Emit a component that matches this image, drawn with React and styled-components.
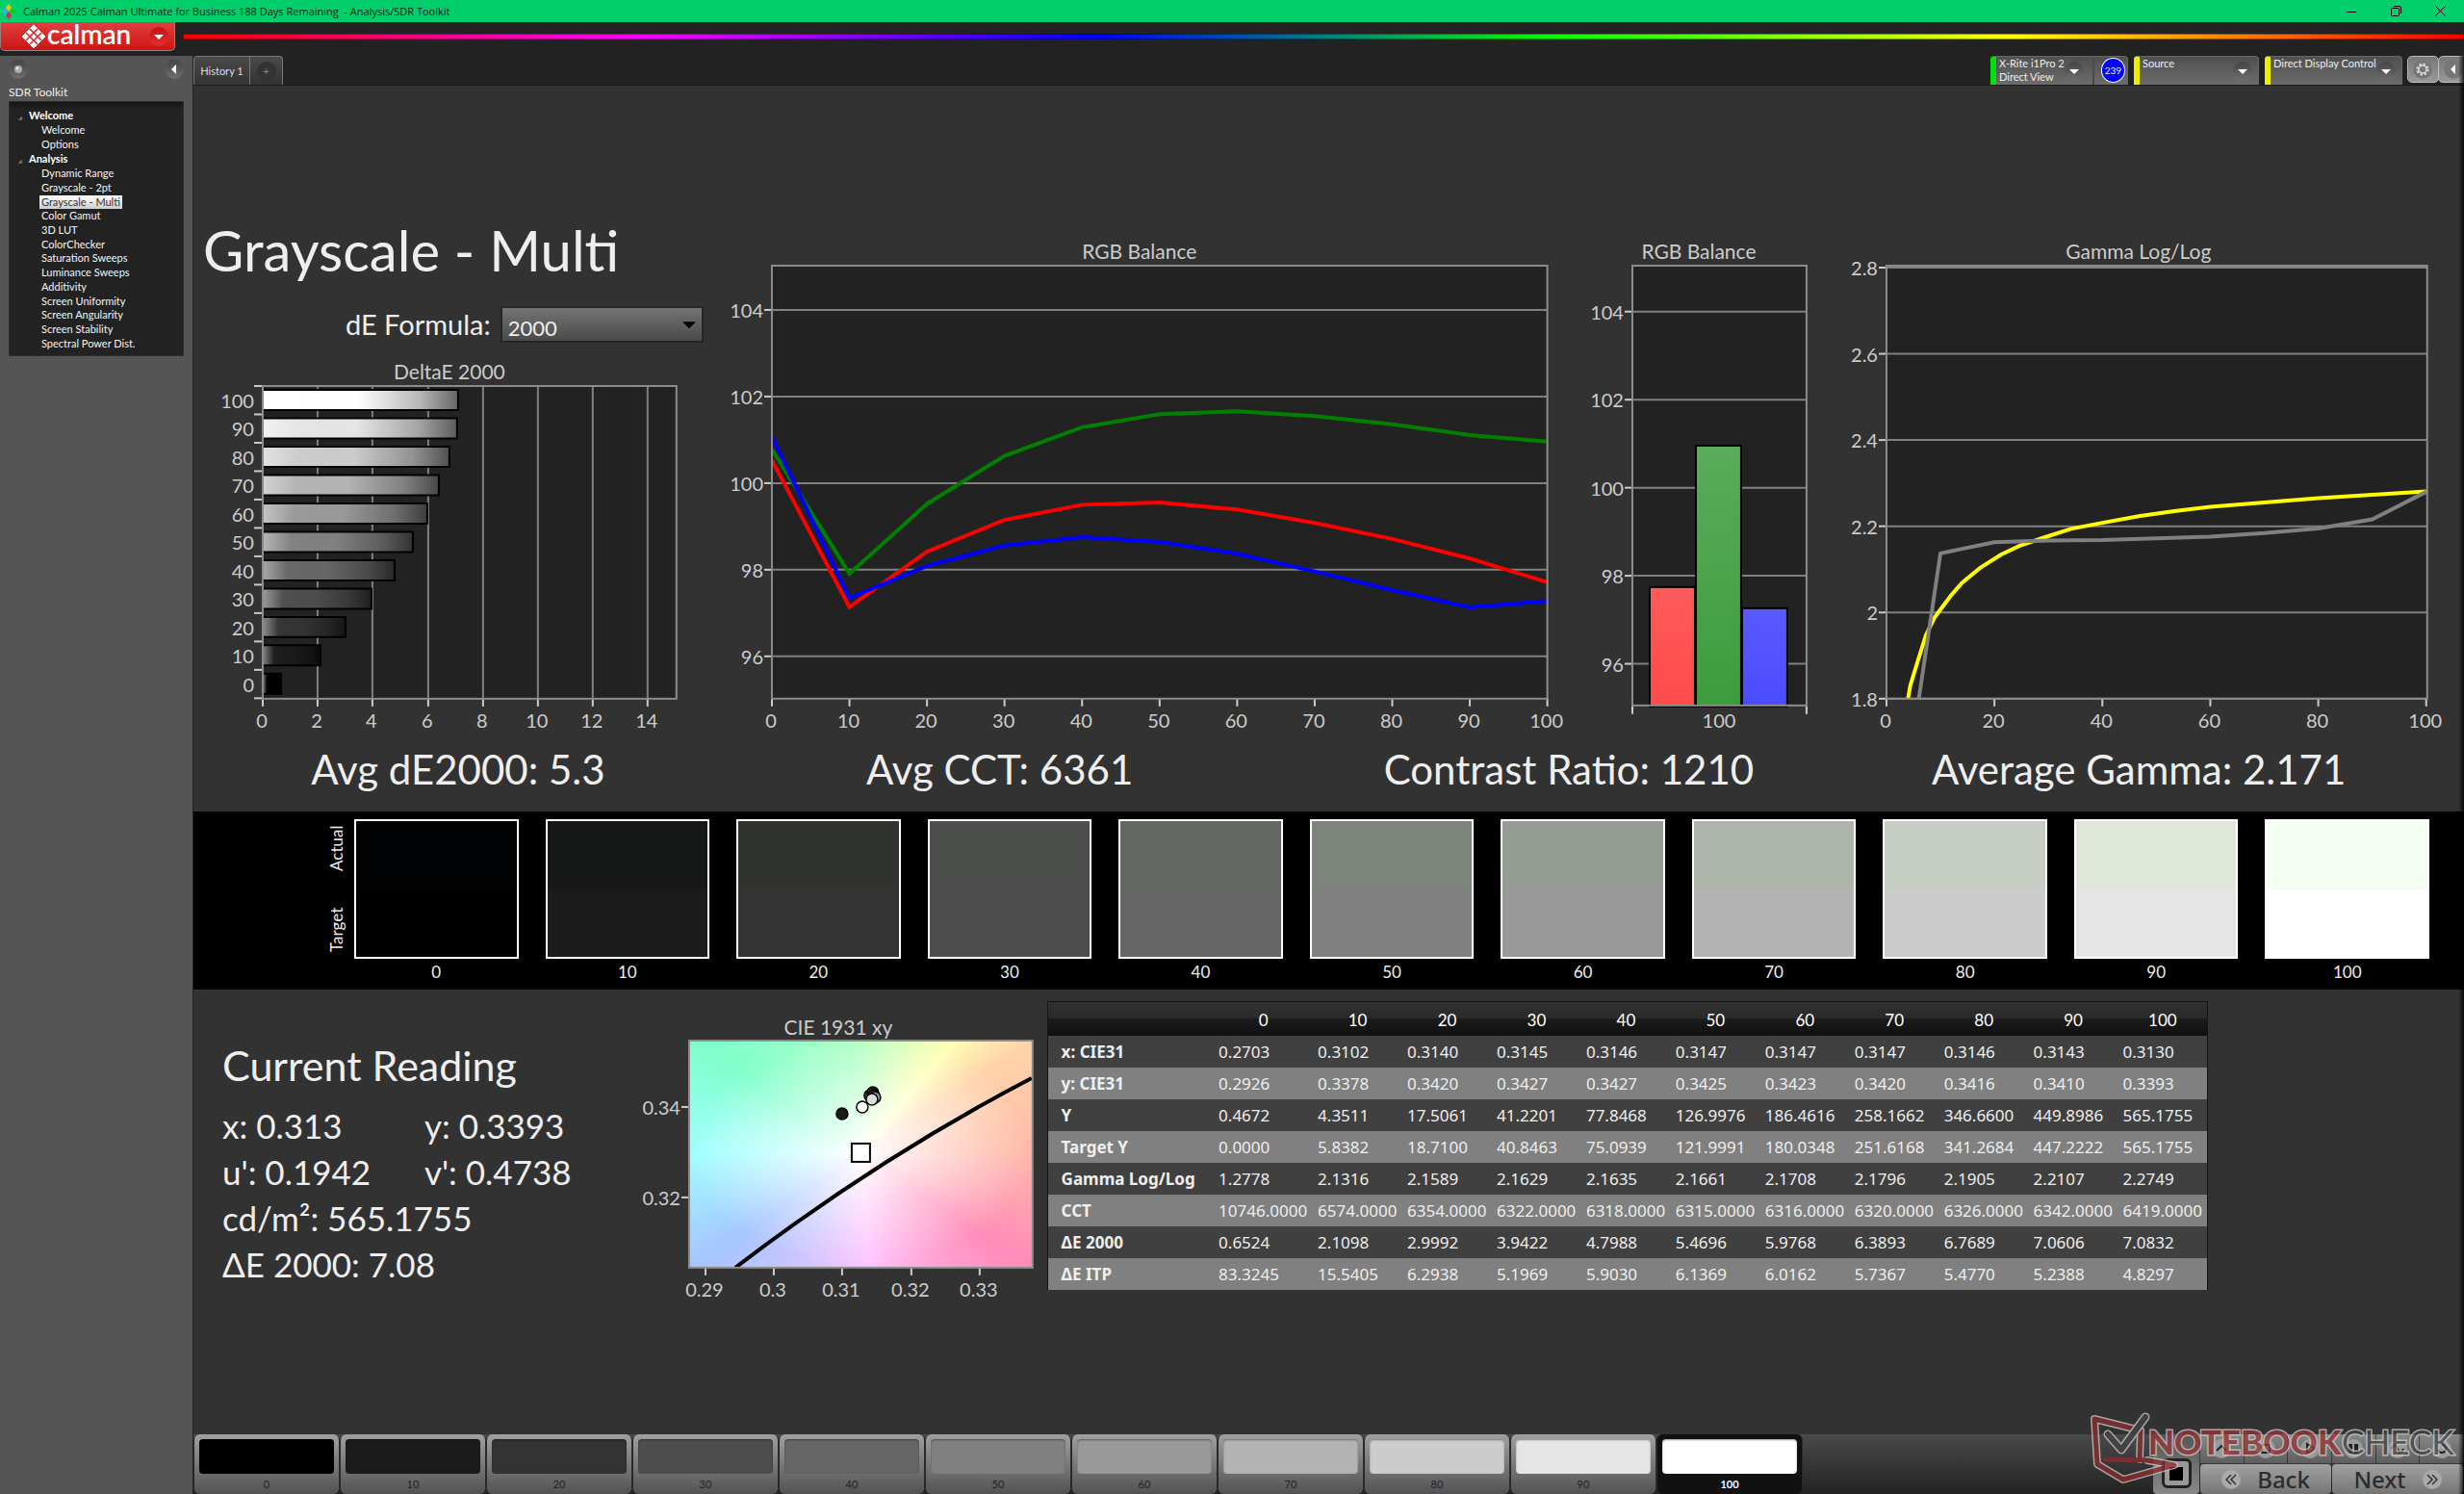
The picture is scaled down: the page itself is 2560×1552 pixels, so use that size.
import React from "react";
import styled, { createGlobalStyle } from "styled-components";

const GlobalStyle = createGlobalStyle`
    * { box-sizing: border-box; }

    body{
        margin: 0;
        background: #323232;
        color: #eee;
        font: 11px Lato, sans-serif;
    }

    h1, h2, p, ul, dl, dd, dt{
        margin: 0;
        padding: 0;
        font-weight: normal;
    }

    button{
        margin: 0;
        padding: 0;
        border: 0;
        background: none;
        color: inherit;
        font: inherit;
    }
`

/* ---------- data ---------- */

const LEVELS = [0, 10, 20, 30, 40, 50, 60, 70, 80, 90, 100]
const GRAYS = ['#000000', '#1b1b1b', '#333333', '#4d4d4d', '#666666', '#808080', '#999999', '#b3b3b3', '#cccccc', '#e5e5e5', '#ffffff']
const ACTUAL = ['#010204', '#151817', '#31332f', '#4b4e4a', '#636962', '#7d847c', '#959c93', '#adb5aa', '#c6cec3', '#dfe7db', '#f2fff1']

const NAV = [
    { title: 'Welcome', items: ['Welcome', 'Options'] },
    {
        title: 'Analysis',
        items: ['Dynamic Range', 'Grayscale - 2pt', 'Grayscale - Multi', 'Color Gamut', '3D LUT', 'ColorChecker',
            'Saturation Sweeps', 'Luminance Sweeps', 'Additivity', 'Screen Uniformity', 'Screen Angularity',
            'Screen Stability', 'Spectral Power Dist.'],
    },
]

const READINGS = [
    ['x: CIE31', '0.2703', '0.3102', '0.3140', '0.3145', '0.3146', '0.3147', '0.3147', '0.3147', '0.3146', '0.3143', '0.3130'],
    ['y: CIE31', '0.2926', '0.3378', '0.3420', '0.3427', '0.3427', '0.3425', '0.3423', '0.3420', '0.3416', '0.3410', '0.3393'],
    ['Y', '0.4672', '4.3511', '17.5061', '41.2201', '77.8468', '126.9976', '186.4616', '258.1662', '346.6600', '449.8986', '565.1755'],
    ['Target Y', '0.0000', '5.8382', '18.7100', '40.8463', '75.0939', '121.9991', '180.0348', '251.6168', '341.2684', '447.2222', '565.1755'],
    ['Gamma Log/Log', '1.2778', '2.1316', '2.1589', '2.1629', '2.1635', '2.1661', '2.1708', '2.1796', '2.1905', '2.2107', '2.2749'],
    ['CCT', '10746.0000', '6574.0000', '6354.0000', '6322.0000', '6318.0000', '6315.0000', '6316.0000', '6320.0000', '6326.0000', '6342.0000', '6419.0000'],
    ['ΔE 2000', '0.6524', '2.1098', '2.9992', '3.9422', '4.7988', '5.4696', '5.9768', '6.3893', '6.7689', '7.0606', '7.0832'],
    ['ΔE ITP', '83.3245', '15.5405', '6.2938', '5.1969', '5.9030', '6.1369', '6.0162', '5.7367', '5.4770', '5.2388', '4.8297'],
]
const DELTA_E = READINGS[6].slice(1).map(Number)

const BALANCE = [
    { color: '#008000', values: [100.78, 97.91, 99.52, 100.63, 101.29, 101.59, 101.66, 101.55, 101.36, 101.11, 100.96] },
    { color: '#ff0000', values: [100.53, 97.14, 98.42, 99.15, 99.5, 99.55, 99.39, 99.08, 98.71, 98.26, 97.71] },
    { color: '#0000ff', values: [101.08, 97.35, 98.09, 98.56, 98.75, 98.64, 98.37, 97.96, 97.53, 97.13, 97.28] },
]

const GAMMA_TARGET = [[4, 1.8], [4.4, 1.83], [5.7, 1.883], [7.3, 1.947], [8.9, 1.988], [10.5, 2.015], [12, 2.04],
    [14, 2.069], [17.3, 2.103], [21.2, 2.134], [24.7, 2.155], [29, 2.173], [34.2, 2.194], [40, 2.208], [47, 2.224],
    [53.3, 2.235], [60, 2.245], [70, 2.255], [80, 2.265], [90, 2.273], [100, 2.281]]
const GAMMA_ACTUAL = [[6, 1.8], [10, 2.137], [20, 2.163], [30, 2.167], [40, 2.168], [50, 2.172], [60, 2.176],
    [70, 2.184], [80, 2.195], [90, 2.216], [100, 2.28]]

/* ---------- window and header ---------- */

const Page = styled.div`
    min-height: 100vh;
    display: flex;
    flex-direction: column;
`

const TitleBar = styled.header`
    height: 23px;
    display: flex;
    align-items: center;
    background: #00cf6b;
    color: #0c2416;
    font: 11px "Open Sans", sans-serif;
    padding: 0 2px 0 1px;

    .name{
        flex: 1;
        white-space: pre;
        padding-left: 7px;
    }
`

const WindowButton = styled.button`
    width: 46px;
    height: 23px;
    display: flex;
    align-items: center;
    justify-content: center;
`

const BrandRow = styled.div`
    height: 35px;
    display: flex;
    gap: 8px;
    background: #222;
`

const BrandButton = styled.button`
    width: 182px;
    height: 30px;
    display: flex;
    align-items: center;
    padding: 0 6px 0 21px;
    border: 1px solid #9a8080;
    border-top: 0;
    border-radius: 0 0 5px 5px;
    background: linear-gradient(#e04040, #cc1414);
    color: #fff;
    font: 600 28px/28px Lato, sans-serif;

    .word{
        flex: 1;
        text-align: left;
        padding: 0 0 5px 1px;
    }
`

const Rainbow = styled.div`
    flex: 1;
    height: 6px;
    margin-top: 12px;
    border: 1px solid #0006;
    background: linear-gradient(90deg, #f00, #f0f 20%, #00f 40%, #0f0 60%, #ff0 80%, #f00);
`

const Round = styled.span`
    width: 20px;
    height: 20px;
    flex: none;
    display: flex;
    align-items: center;
    justify-content: center;
    border-radius: 50%;
    background: ${props => props.$bg || 'linear-gradient(#444, #6e6e6e)'};
`

const Body = styled.div`
    flex: 1;
    display: flex;
`

/* ---------- sidebar ---------- */

const Sidebar = styled.aside`
    width: 201px;
    flex: none;
    padding: 4px 10px 4px 9px;
    background: #555;

    .top{
        display: flex;
        justify-content: space-between;
    }
    .kit{
        font-size: 12px;
        line-height: 16px;
        padding: 6px 0 1px;
    }
`

const Tree = styled.nav`
    height: 265px;
    padding: 6px 0 0 9px;
    border: 1px solid #2e2e2e;
    background: linear-gradient(#151515, #222 8px);
`

const TreeTitle = styled.p`
    height: 16px;
    line-height: 15px;
    font-weight: bold;
    color: #fff;

    &:before{
        content: "◢";
        display: inline-block;
        width: 11px;
        font-size: 5px;
        color: #777;
    }
`

const TreeList = styled.ul`
    height: ${props => props.$height}px;
    display: flex;
    flex-direction: column;
    padding-left: 22px;
    list-style: none;

    li{
        flex: 1;
        display: flex;
        align-items: center;
    }
    a{
        padding: 0 2px;
        line-height: 14px;
        color: #f4f4f4;
        text-decoration: none;
    }
    a[aria-current]{
        background: linear-gradient(#fff, #ccc);
        color: #333;
    }
`

/* ---------- tab strip ---------- */

const Main = styled.main`
    position: relative;
    flex: 1;
    min-width: 0;
    display: flex;
    flex-direction: column;
    border-left: 1px solid #222;
    margin-left: -1px;

    &:after{
        content: "";
        position: absolute;
        top: 0;
        right: 0;
        bottom: 0;
        width: 6px;
        background: linear-gradient(90deg, #0000, #000c);
        pointer-events: none;
    }
`

const Strip = styled.div`
    height: 31px;
    display: flex;
    justify-content: space-between;
    background: #222;
    border-bottom: 1px solid #1b1b1b;
`

const Tabs = styled.div`
    display: flex;
    border: 1px solid #777;
    border-bottom: 0;
    border-radius: 4px 4px 0 0;
    background: linear-gradient(#4a4a4a, #333);

    button{
        width: 33px;
        display: flex;
        align-items: center;
        justify-content: center;
        color: #888;
    }
    button:first-child{
        width: 58px;
        border-right: 1px solid #777;
        color: #ddd;
    }
`

const Devices = styled.div`
    display: flex;
    gap: 6px;
`

const Device = styled.div`
    width: ${props => props.$width}px;
    display: flex;
    padding-right: 6px;
    border: 1px solid #666;
    border-width: 1px 1px 0 0;
    border-left: 6px solid ${props => props.$light};
    border-radius: 4px 4px 0 0;
    background: linear-gradient(#505050, #6c6c6c);
    color: #eee;
    line-height: 14px;

    .label{
        flex: 1;
        padding: 0 0 0 3px;
        white-space: nowrap;
    }
    button{
        align-self: center;
    }
    .divider{
        width: 2px;
        margin: 2px 1px 0 9px;
        background: #4a4a4a;
    }
    .count{
        width: 26px;
        height: 26px;
        border: 1px solid #fff;
        border-radius: 50%;
        background: #00f;
        text-align: center;
        font-size: 10px;
        line-height: 24px;
        margin: 1px -4px 0 6px;
    }
`

const SquareButton = styled.button`
    width: 33px;
    height: 28px;
    display: flex;
    align-items: center;
    padding-left: 5px;
    border: 1px solid #bbb;
    border-radius: 5px;
    background: linear-gradient(#777, #999);
    margin: 0 -6px 0 -1px;
`

/* ---------- workspace ---------- */

const Charts = styled.section`
    display: grid;
    grid-template-columns: 540fr 900fr 240fr 680fr;
    align-items: end;
    padding-top: 136px;

    > *{
        min-width: 0;
    }
`

const Heading = styled.h1`
    padding-left: 10px;
    font-size: 58px;
    line-height: 70px;
    white-space: nowrap;
`

const Formula = styled.div`
    display: flex;
    justify-content: flex-end;
    align-items: center;
    gap: 10px;
    padding: 23px 10px 15px 0;

    label{
        font-size: 29px;
        line-height: 38px;
    }
    .box{
        position: relative;
    }
    select{
        display: block;
        width: 211px;
        height: 38px;
        padding: 7px 6px 0;
        appearance: none;
        border: 2px solid #252525;
        border-radius: 0;
        background: linear-gradient(#747474, #4a4a4a);
        color: #eee;
        font: 22px Lato, sans-serif;
    }
    svg{
        position: absolute;
        right: 8px;
        top: 12px;
        pointer-events: none;
    }
`

const Chart = styled.svg`
    display: block;
    width: 100%;
    font: 20px Lato, sans-serif;

    text{
        fill: #ccc;
    }
    .title{
        font-size: 21px;
    }
    .plot{
        fill: #222;
    }
    .frame{
        fill: none;
        stroke: #8c8c8c;
        stroke-width: 2;
    }
    .grid{
        stroke: #808080;
        stroke-width: 2;
    }
    .tick{
        stroke: #ccc;
        stroke-width: 2;
    }
`

const Averages = styled.section`
    display: grid;
    grid-template-columns: 550fr 576fr 607fr 578fr 49fr;
    padding: 9px 0 19px;
    text-align: center;
    font-size: 42px;
    line-height: 50px;
    white-space: nowrap;
`

const Band = styled.section`
    height: 185px;
    display: flex;
    padding: 8px 36px 0 139px;
    background: #000;
    color: #eee;
    font-size: 17px;
    line-height: 28px;
`

const BandLabels = styled.div`
    width: 28px;
    height: 145px;
    display: flex;
    justify-content: space-between;
    padding: 7px 0 7px 8px;
    line-height: 20px;
    writing-mode: vertical-rl;
    transform: rotate(180deg);
`

const Patches = styled.div`
    flex: 1;
    display: flex;
    gap: 28px;
    text-align: center;
`

const Patch = styled.figure`
    flex: 1;
    margin: 0;

    div{
        height: 145px;
        border: 2px solid #fff;
        background: linear-gradient(${props => props.$actual} 50%, ${props => props.$target} 50%);
    }
`

const Details = styled.section`
    flex: 1;
    display: grid;
    grid-template-columns: 450fr 437fr 1207fr 266fr;
    align-items: start;
    padding-top: 12px;

    > *{
        min-width: 0;
    }
`

const Reading = styled.div`
    padding: 42px 0 0 30px;
    white-space: nowrap;

    h2{
        font-size: 43px;
        line-height: 50px;
        padding-bottom: 13px;
    }
    div{
        display: flex;
        font-size: 35px;
        line-height: 48px;
    }
    p{
        width: 212px;
    }
`

const CieBox = styled.div`
    padding-top: 10px;
`

const CieFill = styled.div`
    width: 100%;
    height: 100%;
    background:
        radial-gradient(ellipse at 50% 49%, #fff, #fff8 32%, #fff0 70%),
        conic-gradient(from 0deg at 50% 49%, #b4ffc4, #ffffb8 40deg, #ffd4aa 57deg, #ffb8a8 90deg,
            #ff8cb8 124deg, #ffc4ff 176deg, #a6c6ff 236deg, #a0ffff 270deg, #80ffcc 303deg, #b4ffc4);
`

const DataTable = styled.table`
    width: 100%;
    table-layout: fixed;
    border-collapse: collapse;
    border: 1px solid #151515;
    border-bottom: 0;
    font: 17px "Noto Sans", sans-serif;
    white-space: nowrap;

    thead th{
        height: 36px;
        padding: 2px 0 0;
        font: 17px Lato, sans-serif;
        color: #fff;
    }
    thead{
        background: linear-gradient(#303030, #2a2a2a 50%, #1b1b1b 51%, #101010);
    }
    tbody tr{
        height: 33px;
        background: #404040;
    }
    tbody tr:nth-child(even){
        background: #808080;
    }
    tbody th{
        padding: 0 0 0 14px;
        text-align: left;
    }
    td{
        padding: 0 0 0 5px;
    }
    .names{
        width: 173px;
    }
    .first{
        width: 103px;
    }
`

/* ---------- bottom bar ---------- */

const Footer = styled.footer`
    position: relative;
    height: 62px;
    display: flex;
    background: linear-gradient(#4a4a4a, #222);
`

const Level = styled.button`
    width: 152px;
    height: 62px;
    padding: 5px 5px 0;
    border: 1px solid #2a2a2a;
    border-width: 0 1px;
    border-radius: 6px;
    background: ${props => props.$on ? '#111' : 'linear-gradient(#a0a0a0, #525252)'};
    color: ${props => props.$on ? '#fff' : '#222'};
    font-weight: ${props => props.$on ? 'bold' : 'normal'};
    line-height: 21px;

    span{
        display: block;
        height: 36px;
        border-radius: 4px;
        background: ${props => props.$color};
        box-shadow: inset 0 1px 2px #0006;
    }
`

const Transport = styled.div`
    display: flex;
    gap: 1px;
    margin-left: auto;
    padding-right: 1px;
    color: #2c2c2c;
`

const PatternButton = styled.button`
    width: 48px;
    display: flex;
    align-items: flex-end;
    justify-content: center;
    padding-bottom: 6px;
    border-radius: 4px;
    background: linear-gradient(#555, #888);

    span{
        width: 31px;
        height: 31px;
        border: 3px solid #222;
        border-radius: 6px;
        background: linear-gradient(#000, #000) center / 14px 14px no-repeat #999;
    }
`

const Keys = styled.div`
    width: 273px;
    display: grid;
    grid-template-rows: 30px 31px;
    gap: 1px;

    div{
        display: flex;
        gap: 1px;
    }
    button{
        flex: 1;
        display: flex;
        align-items: center;
        justify-content: center;
        gap: 17px;
        background: linear-gradient(#888, #5e5e5e);
        font: 500 24px "Noto Sans", sans-serif;
    }
    div + div button{
        border-radius: 4px;
        background: linear-gradient(#a2a2a2, #757575);
    }
`

const Watermark = styled.svg`
    position: absolute;
    right: 5px;
    bottom: 10px;
    width: 386px;
    height: 76px;
    opacity: 0.75;
    pointer-events: none;
`

/* ---------- parts ---------- */

const Arrow = ({ dir, color = '#fff', w = 10 }) => (
    <svg width={w} height={w} viewBox="0 0 10 10">
        <path d={dir === 'left' ? 'M7 0V10L2 5z' : 'M0 3H10L5 8z'} fill={color} />
    </svg>
)

const Axis = ({ left, right, top, bottom, xs = [], ys = [], gridX, gridY }) => (
    <g>
        {gridX && xs.map(([x]) => <line key={x} className="grid" x1={x} x2={x} y1={top} y2={bottom} />)}
        {gridY && ys.map(([y]) => <line key={y} className="grid" x1={left} x2={right} y1={y} y2={y} />)}
        {xs.map(([x, label]) => (
            <g key={x}>
                <line className="tick" x1={x} x2={x} y1={bottom} y2={bottom + 8} />
                <text x={x - 1} y={bottom + 30} textAnchor="middle">{label}</text>
            </g>
        ))}
        {ys.map(([y, label]) => (
            <g key={y}>
                <line className="tick" x1={left - 8} x2={left} y1={y} y2={y} />
                <text x={left - 9} y={y + 8} textAnchor="end">{label}</text>
            </g>
        ))}
    </g>
)

const Frame = ({ left, right, top, bottom, className }) => (
    <rect className={className} x={left} y={top} width={right - left} height={bottom - top} />
)

const DeltaChart = () => {
    const box = { left: 72, right: 502, top: 30, bottom: 355 }
    const x = v => Math.round(box.left + v * 28.6)
    const y = i => box.top + i * 29.5
    return (
        <Chart viewBox="0 0 540 394" role="img" aria-label="DeltaE 2000">
            <defs>
                <linearGradient id="gloss">
                    <stop offset="0" stopColor="#fff" stopOpacity="0.42" />
                    <stop offset="0.18" stopColor="#fff" stopOpacity="0.02" />
                    <stop offset="0.48" stopColor="#000" stopOpacity="0" />
                    <stop offset="0.8" stopColor="#000" stopOpacity="0.28" />
                    <stop offset="1" stopColor="#000" stopOpacity="0.6" />
                </linearGradient>
            </defs>
            <text className="title" x="266" y="23" textAnchor="middle">DeltaE 2000</text>
            <Frame {...box} className="plot" />
            <Axis {...box} xs={[0, 2, 4, 6, 8, 10, 12, 14].map(v => [x(v), v])} gridX />
            {[...LEVELS, 110].map((v, i) => <line key={v} className="tick" x1="63" x2="71" y1={y(i)} y2={y(i)} />)}
            <Frame {...box} className="frame" />
            {LEVELS.map((level, i) => (
                <g key={level}>
                    <text x="63" y={y(10 - i) + 23} textAnchor="end">{level}</text>
                    <rect x="73" y={y(10 - i) + 4} width={x(DELTA_E[i]) - 73} height="21" fill={GRAYS[i]} />
                    <rect x="73" y={y(10 - i) + 4} width={x(DELTA_E[i]) - 73} height="21" fill="url(#gloss)" />
                    <path d={`M73 ${y(10 - i) + 4}H${x(DELTA_E[i])}v21H73`} fill="none" stroke="#000" strokeWidth="2" />
                </g>
            ))}
        </Chart>
    )
}

const BalanceChart = () => {
    const box = { left: 61, right: 867, top: 31, bottom: 481 }
    const x = v => box.left + v * 8.06
    const y = v => 32 + (105 - v) * 45
    return (
        <Chart viewBox="0 0 900 520" role="img" aria-label="RGB Balance">
            <text className="title" x="443" y="24" textAnchor="middle">RGB Balance</text>
            <Frame {...box} className="plot" />
            <Axis {...box} xs={LEVELS.map(v => [x(v), v])} ys={[104, 102, 100, 98, 96].map(v => [y(v), v])} gridY />
            {BALANCE.map(({ color, values }) => (
                <polyline
                    key={color}
                    points={values.map((v, i) => `${x(i * 10)},${y(v)}`).join(' ')}
                    fill="none" stroke={color} strokeWidth="4"
                />
            ))}
            <Frame {...box} className="frame" />
        </Chart>
    )
}

const BalanceBars = () => {
    const box = { left: 56, right: 237, top: 31, bottom: 488 }
    const y = v => 33 + (105 - v) * 45.75
    const bars = [[74, 365, '#ff5a5a', '#ff4b4b'], [122, 218, '#5aac5a', '#3c9c3c'], [170, 387, '#5a5aff', '#4b4bff']]
    return (
        <Chart viewBox="0 0 240 520" role="img" aria-label="RGB Balance at 100">
            <defs>
                {bars.map(([bx, , from, to]) => (
                    <linearGradient key={bx} id={`bar${bx}`} x2="0" y2="1">
                        <stop offset="0" stopColor={from} />
                        <stop offset="1" stopColor={to} />
                    </linearGradient>
                ))}
            </defs>
            <text className="title" x="125" y="24" textAnchor="middle">RGB Balance</text>
            <Frame {...box} className="plot" />
            <Axis {...box} ys={[104, 102, 100, 98, 96].map(v => [y(v), v])} gridY />
            {bars.map(([bx, top]) => (
                <rect key={bx} x={bx} y={top} width="47" height={489 - top} fill={`url(#bar${bx})`} stroke="#000" strokeWidth="2" />
            ))}
            <Frame {...box} className="frame" />
            <path className="tick" d="M56 489v8M237 489v8" />
            <text x="146" y="511" textAnchor="middle">100</text>
        </Chart>
    )
}

const GammaChart = () => {
    const box = { left: 80, right: 642, top: 31, bottom: 481 }
    const x = v => box.left + v * 5.61
    const y = v => 33 + (2.8 - v) * 448
    const line = points => points.map(([px, py]) => `${x(px)},${y(py)}`).join(' ')
    return (
        <Chart viewBox="0 0 680 520" role="img" aria-label="Gamma Log/Log">
            <text className="title" x="342" y="24" textAnchor="middle">Gamma Log/Log</text>
            <Frame {...box} className="plot" />
            <Axis
                {...box}
                xs={[0, 20, 40, 60, 80, 100].map(v => [x(v), v])}
                ys={[2.8, 2.6, 2.4, 2.2, 2, 1.8].map(v => [y(v), v])}
                gridY
            />
            <polyline points={line(GAMMA_TARGET)} fill="none" stroke="#ff0" strokeWidth="4" />
            <polyline points={line(GAMMA_ACTUAL)} fill="none" stroke="#808080" strokeWidth="4" />
            <Frame {...box} className="frame" />
        </Chart>
    )
}

const CieChart = () => {
    const box = { left: 65, right: 422, top: 31, bottom: 267 }
    const dots = [[253, 88, '#444'], [256, 85, '#222'], [257, 88, '#555'], [258, 90, '#999'], [245, 100, '#fff'], [255, 92, '#ddd'], [224, 107, '#1b1b1b']]
    return (
        <Chart viewBox="0 0 437 310" role="img" aria-label="CIE 1931 xy">
            <text className="title" x="220" y="25" textAnchor="middle">CIE 1931 xy</text>
            <foreignObject x="65" y="31" width="357" height="236"><CieFill /></foreignObject>
            <Axis
                {...box}
                xs={[[82, '0.29'], [153, '0.3'], [224, '0.31'], [296, '0.32'], [367, '0.33']]}
                ys={[[100, '0.34'], [194, '0.32']]}
            />
            <path d="M113 267Q262 153 421 70" fill="none" stroke="#000" strokeWidth="4" />
            {dots.map(([cx, cy, fill]) => <circle key={`${cx}-${cy}`} cx={cx} cy={cy} r="6" fill={fill} stroke="#000" strokeWidth="1.5" />)}
            <rect x="234" y="138" width="19" height="19" fill="#fff" stroke="#000" strokeWidth="2" />
            <Frame {...box} className="frame" />
        </Chart>
    )
}

const Logo = () => (
    <svg width="26" height="26" viewBox="0 0 26 26">
        <path d="M13 1L25 13L13 25L1 13z" fill="#fff" stroke="#fff" strokeWidth="1" strokeLinejoin="round" />
        <path d="M9 5L21 17M5 9L17 21M17 5L5 17M21 9L9 21" stroke="#d22" strokeWidth="1.6" />
    </svg>
)

const keyIcons = ['M2 9L7 4L12 9', 'M3 3H11V11H3z', 'M4 2L12 7L4 12z', 'M3 3H5V11H3zM9 3H11V11H9z', 'M1 7C3 2 5 2 7 7S11 12 13 7', 'M3 8A4 4 0 1 0 7 3']

export default function App() {
    return (
        <Page>
            <GlobalStyle />
            <TitleBar>
                <svg width="16" height="18" viewBox="0 0 16 18">
                    <path d="M8 1L11 5L8 9L5 5z" fill="#f4c20d" />
                    <path d="M12 5L15 9L12 13L9 9z" fill="#0fce1b" />
                    <path d="M4 5L7 9L4 13L1 9z" fill="#29b6f6" />
                    <path d="M8 9L11 13L8 17L5 13z" fill="#e91e63" />
                </svg>
                <span className="name">Calman 2025 Calman Ultimate for Business 188 Days Remaining  - Analysis/SDR Toolkit</span>
                <WindowButton aria-label="Minimize"><svg width="10" height="10"><path d="M0 5.5H10" stroke="#000" /></svg></WindowButton>
                <WindowButton aria-label="Restore">
                    <svg width="11" height="11" fill="none" stroke="#000">
                        <rect x="0.5" y="2.5" width="8" height="8" rx="1" />
                        <path d="M3 .5H9Q10.5 .5 10.5 2V8" />
                    </svg>
                </WindowButton>
                <WindowButton aria-label="Close"><svg width="11" height="11"><path d="M.5 .5L10.5 10.5M10.5 .5L.5 10.5" stroke="#000" /></svg></WindowButton>
            </TitleBar>
            <BrandRow>
                <BrandButton>
                    <Logo />
                    <span className="word">calman</span>
                    <Round $bg="linear-gradient(#c81010, #e03030)"><Arrow /></Round>
                </BrandButton>
                <Rainbow />
            </BrandRow>
            <Body>
                <Sidebar>
                    <div className="top">
                        <Round as="button" aria-label="Record">
                            <svg width="8" height="8"><circle cx="4" cy="4" r="4" fill="#aaa" /><circle cx="3" cy="3" r="1.5" fill="#eee" /></svg>
                        </Round>
                        <Round as="button" aria-label="Collapse"><Arrow dir="left" /></Round>
                    </div>
                    <p className="kit">SDR Toolkit</p>
                    <Tree>
                        {NAV.map(({ title, items }) => (
                            <React.Fragment key={title}>
                                <TreeTitle>{title}</TreeTitle>
                                <TreeList $height={items.length > 2 ? 191 : 29}>
                                    {items.map(item => (
                                        <li key={item}>
                                            <a href="#main" aria-current={item === 'Grayscale - Multi' ? 'page' : undefined}>{item}</a>
                                        </li>
                                    ))}
                                </TreeList>
                            </React.Fragment>
                        ))}
                    </Tree>
                </Sidebar>
                <Main id="main">
                    <Strip>
                        <Tabs>
                            <button>History 1</button>
                            <button aria-label="Add history"><Round $bg="#333">+</Round></button>
                        </Tabs>
                        <Devices>
                            <Device $width={143} $light="#00e010">
                                <span className="label">X-Rite i1Pro 2<br />Direct View</span>
                                <Round as="button" aria-label="Meter menu"><Arrow /></Round>
                                <span className="divider" />
                                <span className="count">239</span>
                            </Device>
                            <Device $width={130} $light="#f0ee00">
                                <span className="label">Source</span>
                                <Round as="button" aria-label="Source menu"><Arrow /></Round>
                            </Device>
                            <Device $width={143} $light="#f0ee00">
                                <span className="label">Direct Display Control</span>
                                <Round as="button" aria-label="Display menu"><Arrow /></Round>
                            </Device>
                            <SquareButton aria-label="Settings">
                                <Round $bg="#777">
                                    <svg width="14" height="14" viewBox="0 0 14 14" fill="none" stroke="#ddd">
                                        <circle cx="7" cy="7" r="4" strokeWidth="1.5" />
                                        <circle cx="7" cy="7" r="5.5" strokeWidth="2" strokeDasharray="2.16 2.16" />
                                    </svg>
                                </Round>
                            </SquareButton>
                            <SquareButton aria-label="Expand"><Round $bg="#777"><Arrow dir="left" /></Round></SquareButton>
                        </Devices>
                    </Strip>
                    <Charts>
                        <div>
                            <Heading>Grayscale - Multi</Heading>
                            <Formula>
                                <label htmlFor="formula">dE Formula:</label>
                                <div className="box">
                                    <select id="formula"><option>2000</option></select>
                                    <Arrow color="#000" w={14} />
                                </div>
                            </Formula>
                            <DeltaChart />
                        </div>
                        <BalanceChart />
                        <BalanceBars />
                        <GammaChart />
                    </Charts>
                    <Averages>
                        <p>Avg dE2000: 5.3</p>
                        <p>Avg CCT: 6361</p>
                        <p>Contrast Ratio: 1210</p>
                        <p>Average Gamma: 2.171</p>
                    </Averages>
                    <Band>
                        <BandLabels><span>Target</span><span>Actual</span></BandLabels>
                        <Patches>
                            {LEVELS.map((level, i) => (
                                <Patch key={level} $actual={ACTUAL[i]} $target={GRAYS[i]}>
                                    <div />
                                    <figcaption>{level}</figcaption>
                                </Patch>
                            ))}
                        </Patches>
                    </Band>
                    <Details>
                        <Reading>
                            <h2>Current Reading</h2>
                            <div><p>x: 0.313</p><p>y: 0.3393</p></div>
                            <div><p>u': 0.1942</p><p>v': 0.4738</p></div>
                            <div><p>cd/m²: 565.1755</p></div>
                            <div><p>ΔE 2000: 7.08</p></div>
                        </Reading>
                        <CieBox><CieChart /></CieBox>
                        <DataTable>
                            <colgroup>
                                <col className="names" />
                                <col className="first" />
                            </colgroup>
                            <thead>
                                <tr>
                                    <th aria-label="Measurement" />
                                    {LEVELS.map(level => <th key={level} scope="col">{level}</th>)}
                                </tr>
                            </thead>
                            <tbody>
                                {READINGS.map(([name, ...values]) => (
                                    <tr key={name}>
                                        <th scope="row">{name}</th>
                                        {values.map((value, i) => <td key={LEVELS[i]}>{value}</td>)}
                                    </tr>
                                ))}
                            </tbody>
                        </DataTable>
                    </Details>
                    <Footer>
                        {LEVELS.map((level, i) => (
                            <Level key={level} $color={GRAYS[i]} $on={level === 100}>
                                <span />
                                {level}
                            </Level>
                        ))}
                        <Transport>
                            <PatternButton aria-label="Pattern window"><span /></PatternButton>
                            <Keys>
                                <div>
                                    {keyIcons.map(d => (
                                        <button key={d} aria-label="Playback">
                                            <Round $bg="#9a9a9a"><svg width="14" height="14"><path d={d} fill="none" stroke="#222" strokeWidth="2" /></svg></Round>
                                        </button>
                                    ))}
                                </div>
                                <div>
                                    <button>
                                        <Round $bg="#aaa"><svg width="12" height="12"><path d="M6 1L1 6L6 11M11 1L6 6L11 11" fill="none" stroke="#333" strokeWidth="1.5" /></svg></Round>
                                        Back
                                    </button>
                                    <button>
                                        Next
                                        <Round $bg="#aaa"><svg width="12" height="12"><path d="M1 1L6 6L1 11M6 1L11 6L6 11" fill="none" stroke="#333" strokeWidth="1.5" /></svg></Round>
                                    </button>
                                </div>
                            </Keys>
                        </Transport>
                        <Watermark viewBox="0 0 386 76" aria-label="Notebookcheck">
                            <g fill="none" strokeLinejoin="round" strokeLinecap="round">
                                <path d="M54 50L55 20L7 8L10 55L37 71L90 56L62 51" stroke="#ccc" strokeWidth="8" />
                                <path d="M54 50L55 20L7 8L10 55L37 71L90 56L62 51L18 50" stroke="#8c2c2e" strokeWidth="5" />
                                <path d="M21 24L35 40L60 6" stroke="#ccc" strokeWidth="9" />
                                <path d="M21 24L35 40L60 6" stroke="#444" strokeWidth="6" />
                            </g>
                            <g fontFamily="Lato" fontSize="35" stroke="#ccc" strokeWidth="3" paintOrder="stroke">
                                <text x="63" y="45" fontWeight="900" fill="#9a3436">NOTEBOOK</text>
                                <text x="264" y="45" fontWeight="400" fill="#444">CHECK</text>
                            </g>
                        </Watermark>
                    </Footer>
                </Main>
            </Body>
        </Page>
    )
}
